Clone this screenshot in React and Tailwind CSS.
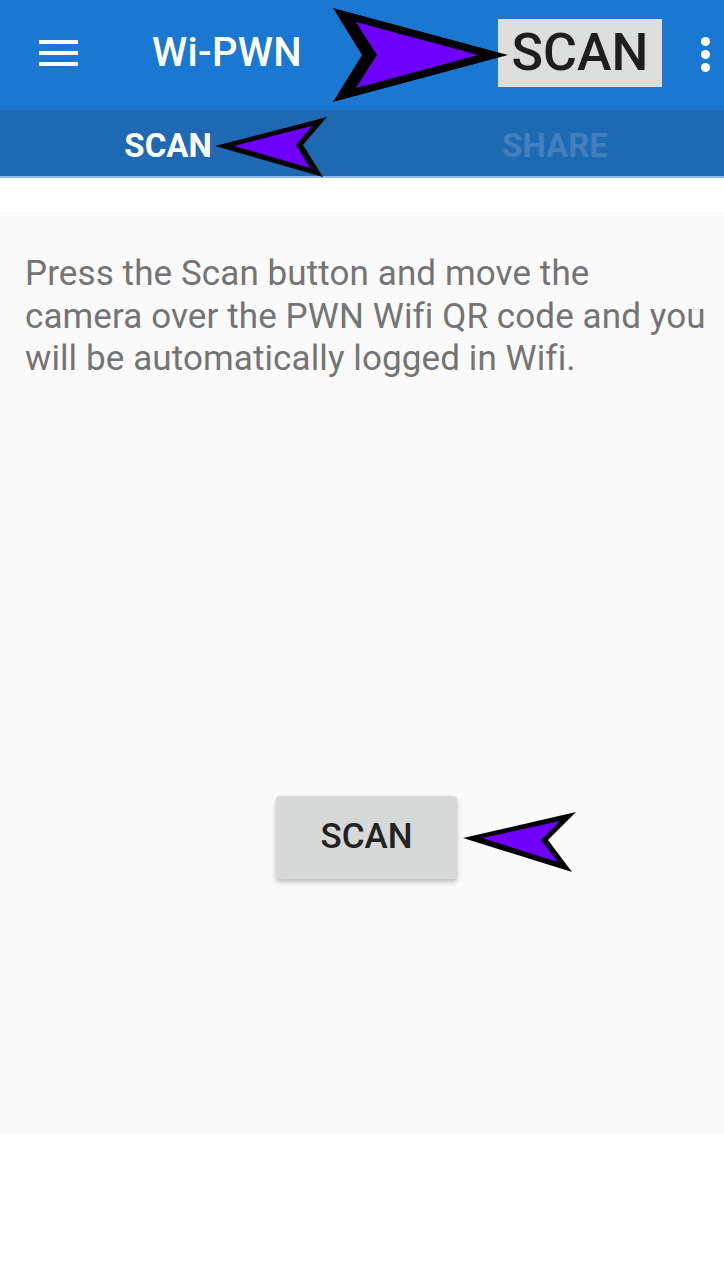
import React from "react";

export default function App() {
  return (
    <div className="w-[724px] h-[1280px] bg-white relative overflow-hidden" style={{ fontFamily: "Roboto, 'Noto Sans', sans-serif" }}>
      {/* Toolbar */}
      <div className="h-[110px] bg-[#1a78d2] flex items-center pb-[4px]">
        <div className="w-[117px] flex items-center justify-center">
          <div className="flex flex-col gap-[7px] w-[39px]">
            <span className="h-[4px] bg-white block" />
            <span className="h-[4px] bg-white block" />
            <span className="h-[4px] bg-white block" />
          </div>
        </div>
        <div className="ml-[35px] text-white text-[40px] font-medium tracking-[0.3px]">Wi-PWN</div>
        <div className="ml-auto mr-[62px] h-[68px] w-[164px] bg-[#dcdddd] flex items-center justify-center text-[#1e1e1e] text-[52px] font-medium">
          SCAN
        </div>
      </div>
      <div className="absolute left-[701px] top-[37px] flex flex-col gap-[4px]">
        <span className="w-[9px] h-[9px] rounded-full bg-white block" />
        <span className="w-[9px] h-[9px] rounded-full bg-white block" />
        <span className="w-[9px] h-[9px] rounded-full bg-white block" />
      </div>

      {/* Tabs */}
      <div className="h-[68px] bg-[#1f69b3] flex border-b-2 border-[#8fb8e4] pt-[6px]">
        <div className="w-1/2 flex items-center justify-center text-white text-[33px] font-bold pr-[26px]">SCAN</div>
        <div className="w-1/2 flex items-center justify-center text-[#427fbf] text-[33px] font-bold pl-[24px]">SHARE</div>
      </div>

      <div className="h-[34px] bg-white" />

      {/* Content */}
      <div className="h-[921px] bg-[#fafafa] flex flex-col">
        <p className="mt-[41px] ml-[25px] text-[35px] leading-[42.5px] tracking-[0.1px] text-[#747474] whitespace-nowrap">
          Press the Scan button and move the
          <br />
          camera over the PWN Wifi QR code and you
          <br />
          will be automatically logged in Wifi.
        </p>
        <div className="mt-[415px] ml-[276px]">
          <button className="w-[181px] h-[83px] bg-[#d7d8d8] rounded-[4px] shadow-[0_3px_5px_rgba(0,0,0,0.25)] text-[#222] text-[35px] font-medium flex items-center justify-center">
            SCAN
          </button>
        </div>
      </div>

      {/* Overlay arrows */}
      <svg className="absolute left-0 top-0" width="724" height="1280" viewBox="0 0 724 1280">
        <polygon points="333,8 508,55 333,102 362,55" fill="#000" />
        <polygon points="356,22 478,55 356,88 377,55" fill="#6f00ff" />
        <polygon points="215,146 327,117 303,145 323,177" fill="#000" />
        <polygon points="234,146 312,126 296,145 310,168" fill="#6f00ff" />
        <polygon points="463,838 576,812 548,840 572,872" fill="#000" />
        <polygon points="482,838 560,821 541,840 558,862" fill="#6f00ff" />
      </svg>
    </div>
  );
}
